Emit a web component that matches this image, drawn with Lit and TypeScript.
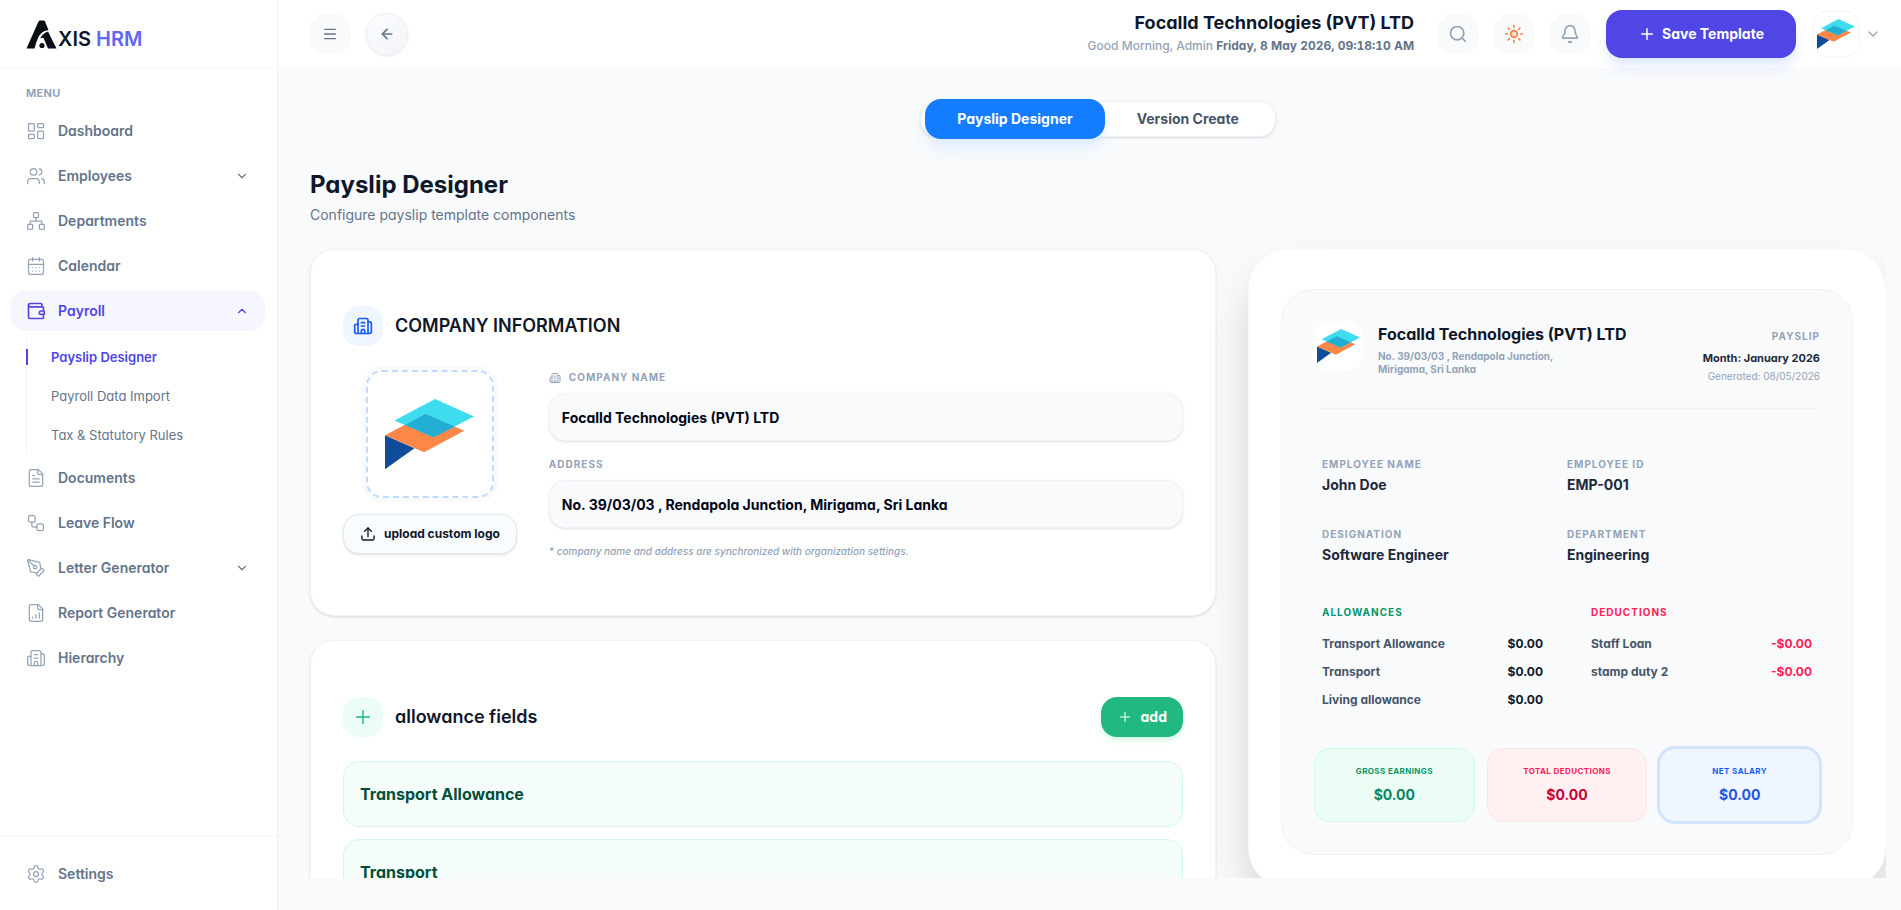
import { LitElement, html, css, svg } from "lit";
import { customElement, property, state } from "lit/decorators.js";
import { classMap } from "lit/directives/class-map.js";

const ICONS: Record<string, ReturnType<typeof svg>> = {
  dashboard: svg`<rect width="7" height="9" x="3" y="3" rx="1"/><rect width="7" height="5" x="14" y="3" rx="1"/><rect width="7" height="9" x="14" y="12" rx="1"/><rect width="7" height="5" x="3" y="16" rx="1"/>`,
  users: svg`<path d="M16 21v-2a4 4 0 0 0-4-4H6a4 4 0 0 0-4 4v2"/><circle cx="9" cy="7" r="4"/><path d="M22 21v-2a4 4 0 0 0-3-3.87"/><path d="M16 3.13a4 4 0 0 1 0 7.75"/>`,
  network: svg`<rect x="16" y="16" width="6" height="6" rx="1"/><rect x="2" y="16" width="6" height="6" rx="1"/><rect x="9" y="2" width="6" height="6" rx="1"/><path d="M5 16v-3a1 1 0 0 1 1-1h12a1 1 0 0 1 1 1v3"/><path d="M12 12V8"/>`,
  calendar: svg`<path d="M8 2v4"/><path d="M16 2v4"/><rect width="18" height="18" x="3" y="4" rx="2"/><path d="M3 10h18"/><path d="M8 14h.01"/><path d="M12 14h.01"/><path d="M16 14h.01"/><path d="M8 18h.01"/><path d="M12 18h.01"/><path d="M16 18h.01"/>`,
  wallet: svg`<path d="M19 7V4a1 1 0 0 0-1-1H5a2 2 0 0 0 0 4h15a1 1 0 0 1 1 1v4h-3a2 2 0 0 0 0 4h3a1 1 0 0 0 1-1v-2a1 1 0 0 0-1-1"/><path d="M3 5v14a2 2 0 0 0 2 2h15a1 1 0 0 0 1-1v-4"/>`,
  file: svg`<path d="M15 2H6a2 2 0 0 0-2 2v16a2 2 0 0 0 2 2h12a2 2 0 0 0 2-2V7Z"/><path d="M14 2v4a2 2 0 0 0 2 2h4"/><path d="M10 9H8"/><path d="M16 13H8"/><path d="M16 17H8"/>`,
  workflow: svg`<rect width="8" height="8" x="3" y="3" rx="2"/><path d="M7 11v4a2 2 0 0 0 2 2h4"/><rect width="8" height="8" x="13" y="13" rx="2"/>`,
  pen: svg`<path d="M15.707 21.293a1 1 0 0 1-1.414 0l-1.586-1.586a1 1 0 0 1 0-1.414l5.586-5.586a1 1 0 0 1 1.414 0l1.586 1.586a1 1 0 0 1 0 1.414z"/><path d="m18 13-1.375-6.874a1 1 0 0 0-.746-.776L3.235 2.028a1 1 0 0 0-1.207 1.207L5.35 15.879a1 1 0 0 0 .776.746L13 18"/><path d="m2.3 2.3 7.286 7.286"/><circle cx="11" cy="11" r="2"/>`,
  report: svg`<path d="M15 2H6a2 2 0 0 0-2 2v16a2 2 0 0 0 2 2h12a2 2 0 0 0 2-2V7Z"/><path d="M14 2v4a2 2 0 0 0 2 2h4"/><path d="M8 18v-1"/><path d="M12 18v-4"/><path d="M16 18v-6"/>`,
  hierarchy: svg`<path d="M10 12h4"/><path d="M10 8h4"/><path d="M14 21v-3a2 2 0 0 0-4 0v3"/><path d="M6 10H4a2 2 0 0 0-2 2v7a2 2 0 0 0 2 2h16a2 2 0 0 0 2-2V9a2 2 0 0 0-2-2h-2"/><path d="M6 21V5a2 2 0 0 1 2-2h8a2 2 0 0 1 2 2v16"/>`,
  settings: svg`<path d="M9.671 4.136a2.340 2.340 0 0 1 4.659 0 2.340 2.340 0 0 0 3.319 1.915 2.340 2.340 0 0 1 2.330 4.033 2.340 2.340 0 0 0 0 3.831 2.340 2.340 0 0 1-2.330 4.033 2.340 2.340 0 0 0-3.319 1.915 2.340 2.340 0 0 1-4.659 0 2.340 2.340 0 0 0-3.320-1.915 2.340 2.340 0 0 1-2.330-4.033 2.340 2.340 0 0 0 0-3.831A2.340 2.340 0 0 1 6.350 6.051a2.340 2.340 0 0 0 3.319-1.915"/><circle cx="12" cy="12" r="3"/>`,
  down: svg`<path d="m6 9 6 6 6-6"/>`,
  up: svg`<path d="m18 15-6-6-6 6"/>`,
  menu: svg`<path d="M4 5h16"/><path d="M4 12h16"/><path d="M4 19h16"/>`,
  back: svg`<path d="m12 19-7-7 7-7"/><path d="M19 12H5"/>`,
  search: svg`<circle cx="11" cy="11" r="8"/><path d="m21 21-4.3-4.3"/>`,
  sun: svg`<circle cx="12" cy="12" r="4" fill="currentColor" fill-opacity="0.25"/><path d="M12 2v2"/><path d="M12 20v2"/><path d="m4.93 4.93 1.41 1.41"/><path d="m17.66 17.66 1.41 1.41"/><path d="M2 12h2"/><path d="M20 12h2"/><path d="m6.34 17.66-1.41 1.41"/><path d="m19.07 4.93-1.41 1.41"/>`,
  bell: svg`<path d="M10.268 21a2 2 0 0 0 3.464 0"/><path d="M3.262 15.326A1 1 0 0 0 4 17h16a1 1 0 0 0 .74-1.673C19.41 13.956 18 12.499 18 8A6 6 0 0 0 6 8c0 4.499-1.411 5.956-2.738 7.326"/>`,
  plus: svg`<path d="M5 12h14"/><path d="M12 5v14"/>`,
  upload: svg`<path d="M12 3v13"/><path d="m17 8-5-5-5 5"/><path d="M21 15v4a2 2 0 0 1-2 2H5a2 2 0 0 1-2-2v-4"/>`,
};

const FONT = css`"Inter", "Liberation Sans", sans-serif`;

@customElement("ui-icon")
class UiIcon extends LitElement {
  @property() name = "plus";
  @property({ type: Number }) size = 20;
  @property({ type: Number }) stroke = 2;

  static styles = css`
    :host { display: inline-flex; flex: none; }
    svg { display: block; }
  `;

  render() {
    return html`<svg width=${this.size} height=${this.size} viewBox="0 0 24 24" fill="none"
      stroke="currentColor" stroke-width=${this.stroke} stroke-linecap="round"
      stroke-linejoin="round" aria-hidden="true">${ICONS[this.name]}</svg>`;
  }
}

@customElement("company-logo")
class CompanyLogo extends LitElement {
  @property({ type: Number }) width = 88;

  static styles = css`
    :host { display: inline-flex; flex: none; }
    svg { display: block; }
  `;

  render() {
    return html`<svg width=${this.width} viewBox="0 0 266 210" role="img" aria-label="Focalld logo">
      <polygon fill="#0f4c9a" points="0,108 0,210 88,147" />
      <polygon fill="#fb8849" points="121,45 237,95 117,159 0,108" />
      <polygon fill="#3edcee" points="150,0 266,52 145,114 28,64" />
      <polygon fill="#22aed3" points="121,45 208,82 145,114 60,78" />
    </svg>`;
  }
}

@customElement("side-bar")
class SideBar extends LitElement {
  @state() private payrollOpen = true;

  static styles = css`
    :host {
      display: flex; flex-direction: column; box-sizing: border-box; width: 278px; flex: none;
      background: #fff; border-right: 1px solid #eef2f6; font-family: ${FONT};
      font-feature-settings: "cv11"; color: #64748b;
    }
    .brand {
      box-sizing: border-box; height: 69px; padding: 0 26px; display: flex; align-items: center;
      border-bottom: 1px solid #f5f7fa; flex: none;
    }
    .brand-link { display: flex; align-items: flex-end; gap: 1px; text-decoration: none; }
    .brand-text { font-size: 20px; line-height: 20px; font-weight: 600; color: #0f172a; }
    .brand-accent { color: #6366f1; }
    nav { flex: 1; min-height: 0; overflow: hidden; padding: 16px 12px 0 10px; }
    .heading { margin: 0 16px 9px; font-size: 11px; line-height: 16px; font-weight: 700; letter-spacing: 0.3px; color: #94a3b8; }
    ul { list-style: none; margin: 0; padding: 0; display: flex; flex-direction: column; gap: 4px; }
    .item {
      box-sizing: border-box; width: 100%; height: 41px; padding: 0 16px; display: flex; align-items: center; gap: 12px;
      border: 0; border-radius: 16px; background: none; color: #64748b; text-decoration: none;
      font: 600 14px/20px ${FONT}; font-feature-settings: inherit; text-align: left; cursor: pointer;
    }
    .item ui-icon { color: #94a3b8; }
    .item .chevron { color: #64748b; }
    .item.active, .item.active ui-icon { color: #4f46e5; }
    .item.active { background: #f6f7fe; }
    .label { flex: 1; }
    .sub { margin: 8px 0 0 16px; gap: 3px; border-left: 1px solid #eef2f6; }
    .sub-link {
      display: flex; align-items: center; height: 36px; font-size: 13px; line-height: 18px;
      font-weight: 400; color: #64748b; text-decoration: none; padding-left: 24px;
    }
    .sub-link.active { color: #4f46e5; font-weight: 600; padding-left: 0; margin-left: -1px; gap: 23px; }
    .sub-link.active::before { content: ""; width: 2px; height: 16px; background: #4f46e5; }
    footer { padding: 16px 12px 16px 10px; border-top: 1px solid #f1f5f9; }
  `;

  private link(icon: string, label: string) {
    return html`<li><a class="item" href="#"><ui-icon name=${icon} size="20" stroke="1.5"></ui-icon><span class="label">${label}</span></a></li>`;
  }

  private group(icon: string, label: string) {
    return html`<li><button class="item" type="button" aria-expanded="false">
      <ui-icon name=${icon} size="20" stroke="1.5"></ui-icon><span class="label">${label}</span>
      <ui-icon class="chevron" name="down" size="14"></ui-icon>
    </button></li>`;
  }

  render() {
    return html`
      <div class="brand">
        <a class="brand-link" href="#" aria-label="Axis HRM">
          <svg width="31" height="29" viewBox="0 0 31 29" aria-hidden="true">
            <path fill="#0b0d14" d="M0.500 28.500 12.500 1.500Q13 .5 14 .5h3.500q1 0 1.500 1l3.500 8.500Q16 10.500 12.500 17q-2.500 5-4 11.500Z"/>
            <path fill="#0b0d14" d="M14 18.500q3-5.500 8-7l8.500 17h-8.500L17.500 18q-2-.6-3.500.5Z"/>
            <circle cx="16" cy="25.500" r="2.600" fill="#0b0d14"/>
          </svg>
          <span class="brand-text">XIS <span class="brand-accent">HRM</span></span>
        </a>
      </div>
      <nav aria-label="Main">
        <p class="heading">MENU</p>
        <ul>
          ${this.link("dashboard", "Dashboard")}
          ${this.group("users", "Employees")}
          ${this.link("network", "Departments")}
          ${this.link("calendar", "Calendar")}
          <li>
            <button class="item active" type="button" aria-expanded=${this.payrollOpen ? "true" : "false"}
              @click=${() => (this.payrollOpen = !this.payrollOpen)}>
              <ui-icon name="wallet" size="20" stroke="2"></ui-icon><span class="label">Payroll</span>
              <ui-icon class="chevron" name=${this.payrollOpen ? "up" : "down"} size="14"></ui-icon>
            </button>
            ${this.payrollOpen
              ? html`<ul class="sub">
                  <li><a class="sub-link active" href="#" aria-current="page">Payslip Designer</a></li>
                  <li><a class="sub-link" href="#">Payroll Data Import</a></li>
                  <li><a class="sub-link" href="#">Tax &amp; Statutory Rules</a></li>
                </ul>`
              : null}
          </li>
          ${this.link("file", "Documents")}
          ${this.link("workflow", "Leave Flow")}
          ${this.group("pen", "Letter Generator")}
          ${this.link("report", "Report Generator")}
          ${this.link("hierarchy", "Hierarchy")}
        </ul>
      </nav>
      <footer>
        <a class="item" href="#"><ui-icon name="settings" size="20" stroke="1.5"></ui-icon><span class="label">Settings</span></a>
      </footer>
    `;
  }
}

@customElement("top-bar")
class TopBar extends LitElement {
  static styles = css`
    :host {
      display: flex; align-items: center; gap: 16px; box-sizing: border-box; height: 68px; padding: 0 20px 0 32px;
      background: #fff; font-family: ${FONT}; font-feature-settings: "cv11"; position: relative; z-index: 1;
    }
    button { font-family: inherit; font-feature-settings: inherit; cursor: pointer; padding: 0; }
    .square {
      box-sizing: border-box; width: 40px; height: 40px; display: grid; place-items: center; flex: none;
      border: 1px solid #f5f7fa; border-radius: 16px; background: #f8fafc; color: #94a3b8;
    }
    .square.dark { color: #64748b; }
    .square.warm { color: #fb823c; }
    .round {
      box-sizing: border-box; width: 42px; height: 42px; display: grid; place-items: center; border-radius: 50%;
      border: 1px solid #eef1f6; background: linear-gradient(135deg, #fdfdfe, #f1f4f9); color: #64748b;
      box-shadow: 0 1px 3px rgba(15, 23, 42, 0.1);
    }
    .greeting { margin-left: auto; margin-right: 8px; text-align: right; }
    .company { margin: 0; font-size: 18px; line-height: 24px; font-weight: 700; color: #0f172a; }
    .status { margin: 0; font-size: 12px; line-height: 22px; font-weight: 500; color: #94a3b8; }
    .status time { font-weight: 700; font-variant-numeric: tabular-nums; color: #64748b; }
    .save {
      height: 48px; padding: 0 32px; display: flex; align-items: center; gap: 6px; border: 0; border-radius: 16px;
      background: #4f46e5; color: #fff; font-size: 14px; line-height: 20px; font-weight: 700;
      box-shadow: 0 10px 15px -3px #dbe6fe, 0 4px 6px -4px #dbe6fe;
    }
    .profile { display: flex; align-items: center; gap: 5px; border: 0; background: none; color: #94a3b8; }
    .avatar {
      box-sizing: border-box; width: 48px; height: 48px; display: grid; place-items: center; border-radius: 16px;
      border: 2px solid #f8fafc; background: #fff;
    }
  `;

  render() {
    return html`
      <button class="square dark" type="button" aria-label="Toggle menu"><ui-icon name="menu" size="16"></ui-icon></button>
      <button class="round" type="button" aria-label="Back"><ui-icon name="back" size="16" stroke="2.5"></ui-icon></button>
      <div class="greeting">
        <p class="company">Focalld Technologies (PVT) LTD</p>
        <p class="status">Good Morning, Admin <time>Friday, 8 May 2026, 09:18:10 AM</time></p>
      </div>
      <button class="square" type="button" aria-label="Search"><ui-icon name="search" size="20"></ui-icon></button>
      <button class="square warm" type="button" aria-label="Theme"><ui-icon name="sun" size="20"></ui-icon></button>
      <button class="square" type="button" aria-label="Notifications"><ui-icon name="bell" size="20"></ui-icon></button>
      <button class="save" type="button"><ui-icon name="plus" size="18"></ui-icon>Save Template</button>
      <button class="profile" type="button" aria-label="Account">
        <span class="avatar"><company-logo width="38"></company-logo></span>
        <ui-icon name="down" size="16"></ui-icon>
      </button>
    `;
  }
}

@customElement("payslip-preview")
class PayslipPreview extends LitElement {
  static styles = css`
    :host {
      display: block; box-sizing: border-box; padding: 39px 32px 32px; background: #fff; border: 1px solid #f8fafc;
      border-radius: 40px; box-shadow: 0 25px 50px -12px rgba(0, 0, 0, 0.25);
    }
    p, h2, h3, dl, dd, ul { margin: 0; padding: 0; }
    .sheet { padding: 32px; border: 1px solid #eff3f8; border-radius: 32px; background: #f8fafc; }
    header { display: flex; align-items: flex-start; gap: 16px; padding-bottom: 24px; border-bottom: 1px solid #f1f5f9; }
    .mark {
      flex: none; width: 48px; height: 48px; display: grid; place-items: center; border-radius: 16px; background: #fff;
      box-shadow: 0 0 0 2px #fcfdfe, 0 1px 3px rgba(0, 0, 0, 0.08);
    }
    .who { flex: 1; }
    .company { font-size: 16px; line-height: 24px; font-weight: 700; color: #0f172a; }
    .address { max-width: 200px; margin-top: 4px; font-size: 10px; line-height: 13px; font-weight: 700; color: #94a3b8; }
    .meta { text-align: right; font-size: 10px; line-height: 15px; color: #94a3b8; padding-top: 7px; }
    .tag { font-weight: 700; letter-spacing: 1px; }
    .month { margin: 7px 0 3px; font-size: 11px; line-height: 15px; font-weight: 700; color: #1e293b; }
    .facts { display: grid; grid-template-columns: 1fr 1fr; gap: 32px 0; padding: 48px 8px 0; }
    dt, .caption { font-size: 10px; line-height: 15px; font-weight: 700; letter-spacing: 1px; color: #94a3b8; }
    dd { margin-top: 3px; font-size: 14px; line-height: 20px; font-weight: 700; color: #1e293b; }
    .lines { display: grid; grid-template-columns: 1fr 1fr; gap: 48px; padding: 40px 8px 0; }
    .caption.plus { color: #059669; }
    .caption.minus { color: #ff2056; }
    ul { list-style: none; margin-top: 16px; display: flex; flex-direction: column; gap: 12px; }
    li { display: flex; justify-content: space-between; font-size: 12px; line-height: 16px; font-weight: 700; color: #475569; }
    .amount { color: #0f172a; }
    .amount.minus { color: #ff2056; }
    .totals { display: grid; grid-template-columns: repeat(3, 1fr); gap: 12px; margin-top: 40px; }
    .total { padding: 16px 8px; border: 1px solid; border-radius: 16px; text-align: center; }
    .name { font-size: 8px; line-height: 12px; font-weight: 700; letter-spacing: 0.4px; }
    .sum { margin-top: 8px; font-size: 14px; line-height: 20px; font-weight: 700; }
    .gross { background: #ecfdf5; border-color: #d0fae5; color: #059669; }
    .gross .sum { color: #07855f; }
    .deduct { background: #fff1f2; border-color: #ffe4e6; color: #ff2056; }
    .deduct .sum { color: #c70036; }
    .net { background: #eff6ff; border-color: #cfe2fe; color: #155dfc; box-shadow: 0 0 0 2px #d3e4fd; }
    .net .sum { color: #2454e6; }
  `;

  private facts = [["EMPLOYEE NAME", "John Doe"], ["EMPLOYEE ID", "EMP-001"], ["DESIGNATION", "Software Engineer"], ["DEPARTMENT", "Engineering"]];
  private allowances = ["Transport Allowance", "Transport", "Living allowance"];
  private deductions = ["Staff Loan", "stamp duty 2"];
  private totals = [["gross", "GROSS EARNINGS"], ["deduct", "TOTAL DEDUCTIONS"], ["net", "NET SALARY"]];

  render() {
    return html`<div class="sheet">
      <header>
        <div class="mark"><company-logo width="43"></company-logo></div>
        <div class="who">
          <h2 class="company">Focalld Technologies (PVT) LTD</h2>
          <p class="address">No. 39/03/03 , Rendapola Junction, Mirigama, Sri Lanka</p>
        </div>
        <div class="meta">
          <p class="tag">PAYSLIP</p>
          <p class="month">Month: January 2026</p>
          <p>Generated: 08/05/2026</p>
        </div>
      </header>
      <dl class="facts">${this.facts.map(([k, v]) => html`<div><dt>${k}</dt><dd>${v}</dd></div>`)}</dl>
      <div class="lines">
        <section>
          <h3 class="caption plus">ALLOWANCES</h3>
          <ul>${this.allowances.map((n) => html`<li><span>${n}</span><span class="amount">$0.00</span></li>`)}</ul>
        </section>
        <section>
          <h3 class="caption minus">DEDUCTIONS</h3>
          <ul>${this.deductions.map((n) => html`<li><span>${n}</span><span class="amount minus">-$0.00</span></li>`)}</ul>
        </section>
      </div>
      <div class="totals">
        ${this.totals.map(([c, n]) => html`<div class="total ${c}"><p class="name">${n}</p><p class="sum">$0.00</p></div>`)}
      </div>
    </div>`;
  }
}

@customElement("app-root")
class AppRoot extends LitElement {
  @state() private tab = "Payslip Designer";

  static styles = css`
    :host {
      display: flex; height: 100vh; overflow: hidden; background: #f8fafc; color: #0f172a;
      font-family: ${FONT}; font-feature-settings: "cv11";
    }
    h1, h2, p { margin: 0; }
    button, input { font-family: inherit; font-feature-settings: inherit; }
    button { cursor: pointer; }
    .page { flex: 1; min-width: 0; display: flex; flex-direction: column; }
    main { flex: 1; min-height: 0; overflow: hidden; margin: 0 15px 32px 0; padding: 31px 0 0 32px; }
    .tabs-row { display: flex; justify-content: center; }
    .tabs {
      box-sizing: border-box; height: 36px; margin: 2px 0; padding: 0 4px; display: flex; align-items: center;
      background: #fff; border: 1px solid #eef1f5; border-radius: 16px; box-shadow: 0 1px 3px rgba(0, 0, 0, 0.1), 0 1px 2px -1px rgba(0, 0, 0, 0.1);
    }
    .tab {
      height: 40px; flex: none; padding: 0 32px; border: 0; border-radius: 16px; background: none; color: #475569;
      font-size: 14px; line-height: 20px; font-weight: 700;
    }
    .tab.active { background: #147dff; color: #fff; box-shadow: 0 10px 15px -3px #dbeafe, 0 4px 6px -4px #dbeafe; }
    .title { margin-top: 30px; font-size: 24px; line-height: 32px; font-weight: 700; }
    .subtitle { margin-top: 4px; font-size: 14px; line-height: 20px; color: #64748b; }
    .columns { margin-top: 24px; display: grid; grid-template-columns: repeat(12, minmax(0, 1fr)); gap: 32px; align-items: start; }
    .left { grid-column: span 7; display: flex; flex-direction: column; gap: 24px; }
    payslip-preview { grid-column: span 5; }
    .card {
      padding: 56px 32px; border: 1px solid #f1f5f9; border-radius: 24px; background: #fff;
      box-shadow: 0 1px 3px rgba(0, 0, 0, 0.1), 0 1px 2px -1px rgba(0, 0, 0, 0.1);
    }
    .card-head { display: flex; align-items: center; gap: 12px; margin-bottom: 24px; }
    .badge { width: 40px; height: 40px; display: grid; place-items: center; border-radius: 16px; background: #eff6ff; color: #155dfc; }
    .badge.green { background: #ecfdf5; color: #10b981; }
    .card-title { flex: 1; font-size: 18px; line-height: 28px; font-weight: 600; }
    .company { display: flex; gap: 32px; align-items: flex-start; }
    .brand { display: flex; flex-direction: column; align-items: center; gap: 16px; }
    .drop {
      box-sizing: border-box; width: 128px; height: 128px; display: grid; place-items: center; border: 2px dashed #bfdbfe;
      border-radius: 16px; background: #fff; box-shadow: 0 0 0 4px #f8fafc;
    }
    .upload {
      height: 40px; padding: 0 16px; display: flex; align-items: center; gap: 8px; border: 1px solid #e5e9ee; border-radius: 16px;
      background: #f9fcff; color: #0f172a; font-size: 12px; line-height: 16px; font-weight: 700;
      box-shadow: 0 1px 3px rgba(0, 0, 0, 0.1), 0 1px 2px -1px rgba(0, 0, 0, 0.1);
    }
    .fields { flex: 1; min-width: 0; display: flex; flex-direction: column; gap: 16px; }
    .field { display: flex; flex-direction: column; gap: 8px; }
    .field label {
      display: flex; align-items: center; gap: 8px; font-size: 10px; line-height: 15px; font-weight: 700; letter-spacing: 1px; color: #94a3b8;
    }
    .field input {
      box-sizing: border-box; width: 100%; height: 48px; padding: 0 12px; border: 1px solid #f1f5f9; border-radius: 16px;
      background: #f8fafc; color: #020617; font-size: 14px; font-weight: 700; outline: none;
      box-shadow: 0 1px 3px rgba(0, 0, 0, 0.1), 0 1px 2px -1px rgba(0, 0, 0, 0.1);
    }
    .note { font-size: 10px; line-height: 15px; font-style: italic; font-weight: 500; color: #94a3b8; }
    .add {
      height: 40px; padding: 0 16px; display: flex; align-items: center; gap: 8px; border: 0; border-radius: 16px;
      background: #22b981; color: #fff; font-size: 14px; line-height: 20px; font-weight: 700;
      box-shadow: 0 4px 6px -1px #d0fae5, 0 2px 4px -2px #d0fae5;
    }
    .entries { display: flex; flex-direction: column; gap: 12px; margin: 0; padding: 0; list-style: none; }
    .entry {
      padding: 20px 16px; border: 1px solid #d0fae5; border-radius: 16px; background: #f4fdf9; color: #004f3b;
      font-size: 16px; line-height: 24px; font-weight: 700;
    }
  `;

  render() {
    const tabs = ["Payslip Designer", "Version Create"];
    return html`
      <side-bar></side-bar>
      <div class="page">
        <top-bar></top-bar>
        <main>
          <div class="tabs-row">
            <div class="tabs" role="tablist">
              ${tabs.map((t) => html`<button type="button" role="tab" aria-selected=${this.tab === t ? "true" : "false"}
                class=${classMap({ tab: true, active: this.tab === t })} @click=${() => (this.tab = t)}>${t}</button>`)}
            </div>
          </div>
          <h1 class="title">Payslip Designer</h1>
          <p class="subtitle">Configure payslip template components</p>
          <div class="columns">
            <div class="left">
              <section class="card">
                <div class="card-head">
                  <span class="badge"><ui-icon name="hierarchy" size="20"></ui-icon></span>
                  <h2 class="card-title">COMPANY INFORMATION</h2>
                </div>
                <div class="company">
                  <div class="brand">
                    <div class="drop"><company-logo width="89"></company-logo></div>
                    <button class="upload" type="button"><ui-icon name="upload" size="16"></ui-icon>upload custom logo</button>
                  </div>
                  <div class="fields">
                    <div class="field">
                      <label for="name"><ui-icon name="hierarchy" size="12"></ui-icon>COMPANY NAME</label>
                      <input id="name" type="text" readonly value="Focalld Technologies (PVT) LTD" />
                    </div>
                    <div class="field">
                      <label for="address">ADDRESS</label>
                      <input id="address" type="text" readonly value="No. 39/03/03 , Rendapola Junction, Mirigama, Sri Lanka" />
                    </div>
                    <p class="note">* company name and address are synchronized with organization settings.</p>
                  </div>
                </div>
              </section>
              <section class="card">
                <div class="card-head">
                  <span class="badge green"><ui-icon name="plus" size="22" stroke="1.5"></ui-icon></span>
                  <h2 class="card-title">allowance fields</h2>
                  <button class="add" type="button"><ui-icon name="plus" size="16" stroke="1.5"></ui-icon>add</button>
                </div>
                <ul class="entries">
                  ${["Transport Allowance", "Transport"].map((n) => html`<li class="entry">${n}</li>`)}
                </ul>
              </section>
            </div>
            <payslip-preview></payslip-preview>
          </div>
        </main>
      </div>
    `;
  }
}
